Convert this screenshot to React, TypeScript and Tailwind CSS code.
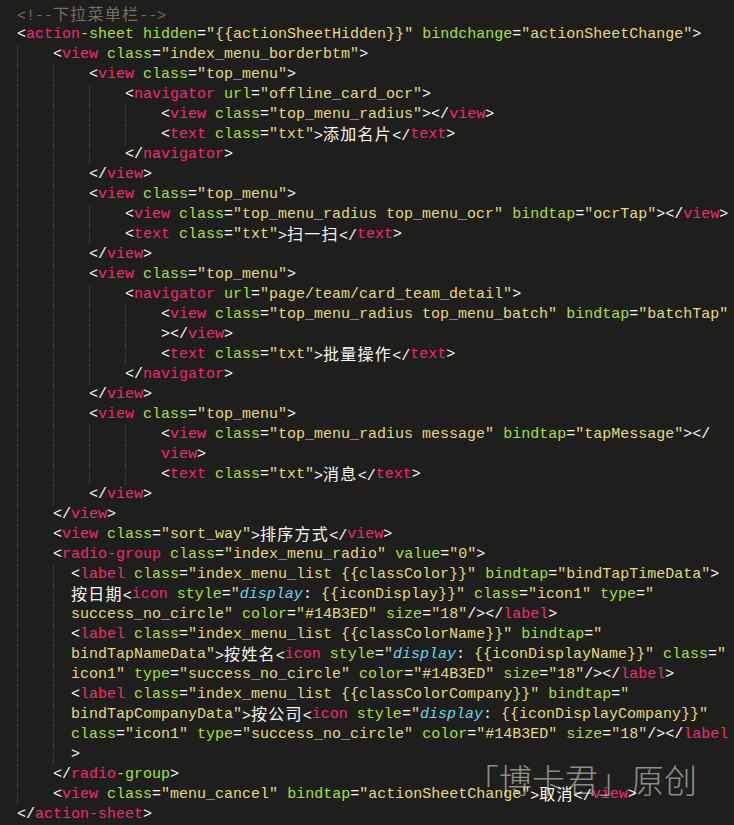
import React from 'react';

// source shown in the editor; "¦" switches the rest of a tag name to attribute colour
const SRC = `<!--下拉菜单栏-->
<action¦-sheet hidden="{{actionSheetHidden}}" bindchange="actionSheetChange">
    <view class="index_menu_borderbtm">
        <view class="top_menu">
            <navigator url="offline_card_ocr">
                <view class="top_menu_radius"></view>
                <text class="txt">添加名片</text>
            </navigator>
        </view>
        <view class="top_menu">
            <view class="top_menu_radius top_menu_ocr" bindtap="ocrTap"></view>
            <text class="txt">扫一扫</text>
        </view>
        <view class="top_menu">
            <navigator url="page/team/card_team_detail">
                <view class="top_menu_radius top_menu_batch" bindtap="batchTap"
                ></view>
                <text class="txt">批量操作</text>
            </navigator>
        </view>
        <view class="top_menu">
                <view class="top_menu_radius message" bindtap="tapMessage"></
                view>
                <text class="txt">消息</text>
        </view>
    </view>
    <view class="sort_way">排序方式</view>
    <radio-group class="index_menu_radio" value="0">
      <label class="index_menu_list {{classColor}}" bindtap="bindTapTimeData">
      按日期<icon style="display: {{iconDisplay}}" class="icon1" type="
      success_no_circle" color="#14B3ED" size="18"/></label>
      <label class="index_menu_list {{classColorName}}" bindtap="
      bindTapNameData">按姓名<icon style="display: {{iconDisplayName}}" class="
      icon1" type="success_no_circle" color="#14B3ED" size="18"/></label>
      <label class="index_menu_list {{classColorCompany}}" bindtap="
      bindTapCompanyData">按公司<icon style="display: {{iconDisplayCompany}}"
      class="icon1" type="success_no_circle" color="#14B3ED" size="18"/></label
      >
    </radio¦-group>
    <view class="menu_cancel" bindtap="actionSheetChange">取消</view>
</action-sheet>`;

const C = {
  punct: 'text-[#f8f8f2]',
  tag: 'text-[#f92672]',
  attr: 'text-[#a6e22e]',
  str: 'text-[#e6db74]',
  cmt: 'text-[#75715e]',
  kw: 'text-[#66d9ef] italic',
};

type Tok = { t: string; c: string };
type Line = { indent: number; toks: Tok[] };

function highlight(src: string): Line[] {
  let state: 'text' | 'tag' | 'attrs' | 'str' | 'cmt' = 'text';
  let tagColor = C.tag;
  return src.split('\n').map((raw) => {
    const indent = raw.length - raw.trimStart().length;
    const s = raw.slice(indent);
    const toks: Tok[] = [];
    const push = (t: string, c: string) => {
      const last = toks[toks.length - 1];
      if (last && last.c === c) last.t += t;
      else toks.push({ t, c });
    };
    let i = 0;
    while (i < s.length) {
      const ch = s[i];
      if (state === 'cmt') {
        if (s.startsWith('-->', i)) {
          push('-->', C.cmt);
          i += 3;
          state = 'text';
        } else {
          push(ch, C.cmt);
          i++;
        }
        continue;
      }
      if (state === 'text') {
        if (s.startsWith('<!--', i)) {
          push('<!--', C.cmt);
          i += 4;
          state = 'cmt';
          continue;
        }
        if (ch === '<') {
          push('<', C.punct);
          i++;
          if (s[i] === '/') {
            push('/', C.punct);
            i++;
          }
          state = 'tag';
          tagColor = C.tag;
          continue;
        }
        push(ch, C.punct);
        i++;
        continue;
      }
      if (state === 'tag') {
        if (ch === '¦') {
          tagColor = C.attr;
          i++;
          continue;
        }
        if (/[\w-]/.test(ch)) {
          push(ch, tagColor);
          i++;
          continue;
        }
        state = 'attrs';
        continue;
      }
      if (state === 'attrs') {
        if (ch === '"') {
          push(ch, C.str);
          i++;
          state = 'str';
        } else if (ch === '>') {
          push(ch, C.punct);
          i++;
          state = 'text';
        } else if (/[\w-]/.test(ch)) {
          push(ch, C.attr);
          i++;
        } else {
          push(ch, C.punct);
          i++;
        }
        continue;
      }
      // string
      if (s.startsWith('display:', i)) {
        push('display', C.kw);
        push(':', C.punct);
        i += 8;
        continue;
      }
      push(ch, C.str);
      i++;
      if (ch === '"') state = 'attrs';
    }
    return { indent, toks };
  });
}

const LINES = highlight(SRC);
const CJK = /([\u3000-\u303f\u4e00-\u9fff\uff00-\uffef]+)/;

function Guides({ n }: { n: number }) {
  const groups: number[] = [];
  for (let left = n; left > 0; left -= 4) groups.push(Math.min(4, left));
  return (
    <>
      {groups.map((g, k) => (
        <span
          key={k}
          className={`inline-block h-5 shrink-0 border-l border-dotted border-[#4a4a45] ${g === 4 ? 'w-[36px]' : 'w-[18px]'}`}
        />
      ))}
    </>
  );
}

function CodeLine({ line }: { line: Line }) {
  return (
    <div className="flex h-5 items-center whitespace-pre">
      <Guides n={line.indent} />
      {line.toks.map((tok, k) => (
        <span key={k} className={tok.c}>
          {tok.t.split(CJK).map((part, j) =>
            j % 2 === 1 ? (
              <span key={j} className="font-['Noto_Sans_CJK_SC',sans-serif] text-[16px] tracking-[1.25px]">
                {part}
              </span>
            ) : (
              part
            )
          )}
        </span>
      ))}
    </div>
  );
}

export default function App() {
  return (
    <div className="relative h-[825px] w-full overflow-hidden bg-[#1e1e1c] pt-[5px] pl-[17px] font-['Liberation_Mono','Noto_Sans_CJK_SC',monospace] text-[15px] leading-5">
      {LINES.map((line, k) => (
        <CodeLine key={k} line={line} />
      ))}

      {/* watermark */}
      <div className="absolute left-[466px] top-[763px] font-['Noto_Sans_CJK_SC',sans-serif] text-[33px] font-light leading-none text-white/50">
        「博卡君」原创
      </div>
    </div>
  );
}
